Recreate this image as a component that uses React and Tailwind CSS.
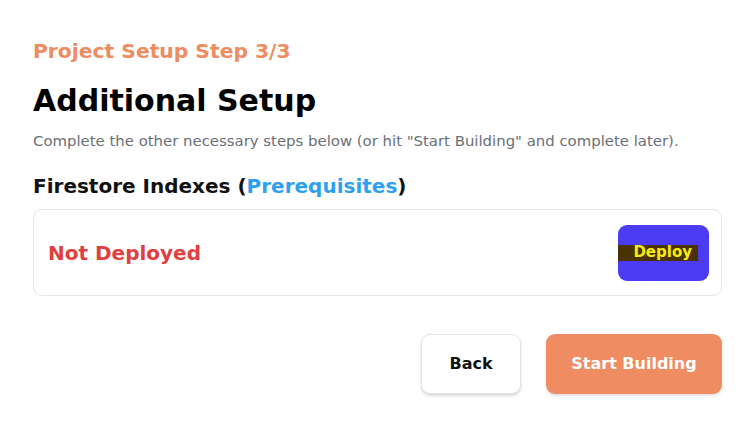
import React from 'react';

export default function App() {
  return (
    <div className="min-h-screen w-full bg-white font-['DejaVu_Sans',sans-serif] text-black">
      <div className="flex flex-col pl-[33px] pr-[30px] pt-[38px]">
        <p className="text-[20.3px] font-bold leading-[26px] text-[#ee8c62]">Project Setup Step 3/3</p>
        <h1 className="mt-[19px] text-[30px] font-bold leading-[36px]">Additional Setup</h1>
        <p className="mt-[12px] text-[14.9px] leading-[20px] text-[#6b6f76]">
          Complete the other necessary steps below (or hit "Start Building" and complete later).
        </p>
        <h2 className="mt-[22px] text-[20px] font-bold leading-[26px] text-[#111]">
          Firestore Indexes (<span className="text-[#2f9ff0]">Prerequisites</span>)
        </h2>
        <div className="mt-[10px] flex h-[87px] items-center justify-between rounded-[9px] border border-[#e5e7ee] pl-[14px] pr-[12px]">
          <span className="text-[20px] font-bold text-[#e0403f]">Not Deployed</span>
          <button className="flex h-[56px] w-[91px] items-center rounded-[9px] bg-[#4b3bf2]">
            <span className="flex h-[16px] w-[80px] items-center justify-end bg-[#4a3300] pr-[6px] text-[15px] font-bold text-[#f5ec0a]">
              Deploy
            </span>
          </button>
        </div>
        <div className="mt-[38px] flex justify-end gap-[25px]">
          <button className="h-[60px] w-[100px] rounded-[9px] border border-[#e3e4e8] bg-white text-[16px] font-bold text-[#111] shadow-[0_2px_3px_rgba(0,0,0,0.15)]">
            Back
          </button>
          <button className="h-[60px] w-[176px] rounded-[9px] bg-[#ef8c62] text-[16px] font-bold text-white shadow-[0_2px_3px_rgba(0,0,0,0.12)]">
            Start Building
          </button>
        </div>
      </div>
    </div>
  );
}
